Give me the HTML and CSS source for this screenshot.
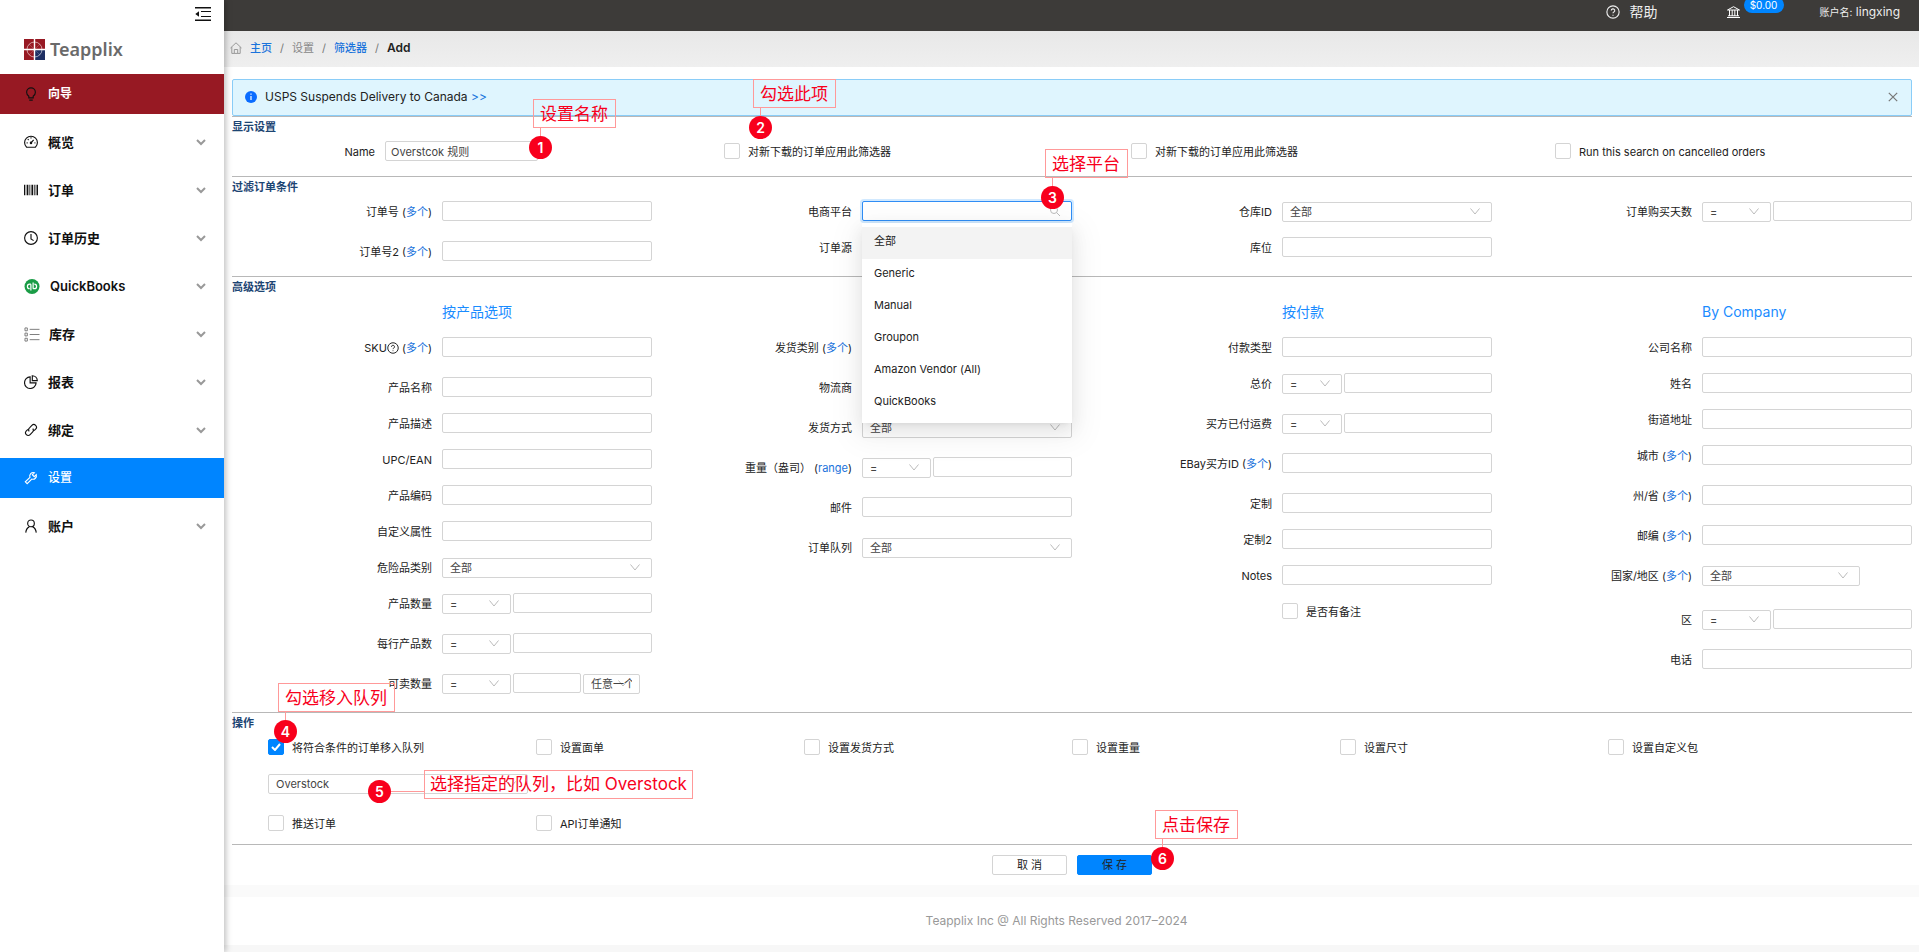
FILE: index.html
```html
<!DOCTYPE html>
<html lang="zh-CN">
<head>
<meta charset="utf-8">
<meta name="viewport" content="width=device-width, initial-scale=1">
<title>Teapplix</title>
<link rel="stylesheet" href="styles.css">
</head>
<body>
<svg class="defs" aria-hidden="true">
  <symbol id="chev" viewBox="0 0 10 7"><path d="M1 1l4 4 4-4"/></symbol>
  <symbol id="question" viewBox="0 0 16 16"><circle cx="8" cy="8" r="7"/><path d="M6 6.4a2 2 0 1 1 3 1.7c-.7.4-1 .7-1 1.4M8 11.2v1"/></symbol>
</svg>
<div class="layout">
  <aside class="sidebar">
    <div class="collapse">
      <button type="button" aria-label="收起菜单"><svg width="16" height="14" viewBox="0 0 16 14" fill="none" stroke="#111" stroke-width="1"><path d="M0 .8h16M0 13.2h16" stroke-width="1.5"/><path d="M6 4.500h10M6 9.500h10"/><path d="M4 4.2v5.6L.3 7z" fill="#111" stroke="none"/></svg></button>
    </div>
    <a class="logo" href="#">
      <svg width="21" height="21" viewBox="0 0 21 21"><path fill="#971923" d="M0 0h21v21H0z"/><path fill="#1e2f63" d="M11 11h10v10H11z"/><path stroke="#fff" stroke-width="1.4" d="M10.5 0v21M0 10.5h21"/><circle cx="10.5" cy="10.5" r="7.5" fill="none" stroke="#fff" stroke-width=".7" opacity=".8"/><path d="M5 5l11 11M16 5L5 16" stroke="#fff" stroke-width=".3" opacity=".6"/></svg>
      <span>Teapplix</span>
    </a>
    <nav class="menu">
      <a class="item guide" href="#"><svg class="mi" viewBox="0 0 16 16"><path d="M5.5 12.5v-2C4 9.600 3 8 3 6a5 5 0 0 1 10 0c0 2-1 3.600-2.500 4.500v2zM6 15h4"/></svg><span>向导</span></a>
      <a class="item" href="#"><svg class="mi" viewBox="0 0 16 16"><path d="M3 14a7.300 7.300 0 1 1 10 0zM8 9l3-3.500M8 2.500V4M3 9h1.200M4.300 4.800l1 .9M12 9h1"/><circle cx="8" cy="9" r=".8"/></svg><span>概览</span><svg class="chev"><use href="#chev"/></svg></a>
      <a class="item" href="#"><svg class="mi" viewBox="0 0 16 16"><g fill="#111" stroke="none"><path d="M0 2h1.500v12H0zM3 2h2v12H3zM6.200 2h1v12h-1zM8.500 2h2v12h-2zM11.800 2h1.200v12h-1.200zM14.300 2H16v12h-1.700z"/></g></svg><span>订单</span><svg class="chev"><use href="#chev"/></svg></a>
      <a class="item" href="#"><svg class="mi" viewBox="0 0 16 16"><circle cx="8" cy="8" r="7.300"/><path d="M8 3.500V9l3 2"/></svg><span>订单历史</span><svg class="chev"><use href="#chev"/></svg></a>
      <a class="item" href="#"><svg class="mi big" viewBox="0 0 16 16"><circle cx="8" cy="8" r="8" fill="#1a9c46" stroke="none"/><g stroke="#fff" stroke-width="1.300"><path d="M6.800 5.500H5.500a2.300 2.300 0 0 0 0 4.800M6.800 5.500v6.800M9.200 10.300h1.300a2.300 2.300 0 0 0 0-4.800M9.200 10.300V3.600"/></g></svg><span>QuickBooks</span><svg class="chev"><use href="#chev"/></svg></a>
      <a class="item" href="#"><svg class="mi big list" viewBox="0 0 16 16"><g stroke="#777" stroke-width="1"><path d="M.5 1h2.500v3H.5zM.5 6.500h2.500v3H.5zM.5 12h2.500v3H.5zM5.500 2.500H16M5.500 8H16M5.500 13.500H16"/></g></svg><span>库存</span><svg class="chev"><use href="#chev"/></svg></a>
      <a class="item" href="#"><svg class="mi" viewBox="0 0 16 16"><path d="M7 2.200A6.600 6.600 0 1 0 13.800 9H7zM9.500.8v5.700h5.700A5.800 5.800 0 0 0 9.500.8z"/></svg><span>报表</span><svg class="chev"><use href="#chev"/></svg></a>
      <a class="item" href="#"><svg class="mi" viewBox="0 0 16 16"><path d="M6 9.500a3 3 0 0 1 .3-4L9 2.700a3 3 0 0 1 4.300 4.300L11.500 8.800M10 6.500a3 3 0 0 1-.3 4L7 13.300A3 3 0 0 1 2.700 9L4.500 7.200"/></svg><span>绑定</span><svg class="chev"><use href="#chev"/></svg></a>
      <a class="item active" href="#"><svg class="mi" viewBox="0 0 16 16"><path d="M14 4.200l-2.300 2.300-2.200-2.200L11.800 2a4 4 0 0 0-5 5.200L1.500 12.400l2.100 2.100 5.300-5.300A4 4 0 0 0 14 4.200z"/></svg><span>设置</span></a>
      <a class="item" href="#"><svg class="mi" viewBox="0 0 16 16"><circle cx="8" cy="5" r="3.800"/><path d="M2 15.500c.4-3.500 2.300-5.700 4-6.500M14 15.500c-.4-3.500-2.300-5.700-4-6.500"/></svg><span>账户</span><svg class="chev"><use href="#chev"/></svg></a>
    </nav>
  </aside>

  <div class="main">
    <header class="topbar">
      <a class="help" href="#"><svg class="q" width="14" height="14"><use href="#question"/></svg>帮助</a>
      <a class="bank" href="#" aria-label="余额"><svg width="13" height="12" viewBox="0 0 13 12" fill="none" stroke="#fff" stroke-width="1"><path d="M.5 4L6.500.7l6 3.300zM0 11.500h13M1 9.800h11M2.500 4v6M5.200 4v6M7.800 4v6M10.500 4v6"/></svg><span class="badge">$0.00</span></a>
      <span class="account"><small>账户名:</small> lingxing</span>
    </header>

    <nav class="crumbs">
      <svg width="12" height="12" viewBox="0 0 12 12" fill="none" stroke="#999" stroke-width="1"><path d="M.5 6L6 .8 11.500 6M1.800 5v6.400h8.400V5M4.300 11V7.500h3.400V11"/></svg>
      <a href="#">主页</a><i>/</i><span>设置</span><i>/</i><a href="#">筛选器</a><i>/</i><b>Add</b>
    </nav>

    <main class="content">
      <div class="alert">
        <svg width="12" height="12" viewBox="0 0 12 12"><circle cx="6" cy="6" r="6" fill="#0a6cff"/><path d="M6 5v4M6 2.600v1.200" stroke="#fff" stroke-width="1.200"/></svg>
        <span>USPS Suspends Delivery to Canada <a href="#">&gt;&gt;</a></span>
        <button type="button" aria-label="关闭"><svg width="10" height="10" viewBox="0 0 10 10" stroke="#777" stroke-width="1.200"><path d="M.8.8l8.400 8.400M9.200.8L.8 9.200"/></svg></button>
      </div>

      <form>
        <section class="sec display">
          <h2>显示设置</h2>
          <div class="display-grid">
            <div class="name-row">
              <label for="name">Name</label>
              <div class="anchor name-box"><input id="name" type="text" value="Overstcok 规则">
                <div class="mark m1"><b>1</b><span>设置名称</span></div>
              </div>
            </div>
            <div class="anchor"><label class="check"><input type="checkbox"><span>对新下载的订单应用此筛选器</span></label><div class="mark m2"><b>2</b><span>勾选此项</span></div></div>
            <label class="check"><input type="checkbox"><span>对新下载的订单应用此筛选器</span></label>
            <label class="check"><input type="checkbox"><span>Run this search on cancelled orders</span></label>
          </div>
        </section>

        <section class="sec filter">
          <h2>过滤订单条件</h2>
          <div class="cols">
            <div class="col">
              <div class="row tall"><div class="lab"><label for="f1">订单号</label> (<a href="#">多个</a>)</div><div class="fld"><input id="f1" type="text"></div></div>
              <div class="row tall"><div class="lab"><label for="f2">订单号2</label> (<a href="#">多个</a>)</div><div class="fld"><input id="f2" type="text"></div></div>
            </div>
            <div class="col">
              <div class="row"><div class="lab"><label for="f3">电商平台</label></div>
                <div class="fld anchor"><input id="f3" class="focused" type="text" role="combobox" aria-expanded="true" aria-controls="plat">
                  <svg class="search" width="10" height="10" viewBox="0 0 10 10" fill="none" stroke="#bbb"><circle cx="4" cy="4" r="3.500"/><path d="M6.500 6.500L10 10"/></svg>
                  <ul class="popup" id="plat" role="listbox">
                    <li class="on" role="option">全部</li><li role="option">Generic</li><li role="option">Manual</li><li role="option">Groupon</li><li role="option">Amazon Vendor (All)</li><li role="option">QuickBooks</li>
                  </ul>
                  <div class="mark m3"><b>3</b><span>选择平台</span></div>
                </div></div>
              <div class="row"><div class="lab"><label for="f4">订单源</label></div><div class="fld"><input id="f4" type="text"></div></div>
            </div>
            <div class="col">
              <div class="row"><div class="lab"><label for="f5">仓库ID</label></div><div class="fld"><select id="f5"><option>全部</option></select></div></div>
              <div class="row"><div class="lab"><label for="f6">库位</label></div><div class="fld"><input id="f6" type="text"></div></div>
            </div>
            <div class="col">
              <div class="row"><div class="lab"><label for="f7">订单购买天数</label></div><div class="fld"><select class="op" aria-label="比较"><option>=</option></select><input id="f7" type="text"></div></div>
            </div>
          </div>
        </section>

        <section class="sec advanced">
          <h2>高级选项</h2>
          <div class="cols">
            <div class="col">
              <h3>按产品选项</h3>
              <div class="row tall"><div class="lab"><label for="a1">SKU</label><svg class="q dark" width="12" height="12"><use href="#question"/></svg> (<a href="#">多个</a>)</div><div class="fld"><input id="a1" type="text"></div></div>
              <div class="row"><div class="lab"><label for="a2">产品名称</label></div><div class="fld"><input id="a2" type="text"></div></div>
              <div class="row"><div class="lab"><label for="a3">产品描述</label></div><div class="fld"><input id="a3" type="text"></div></div>
              <div class="row"><div class="lab"><label for="a4">UPC/EAN</label></div><div class="fld"><input id="a4" type="text"></div></div>
              <div class="row"><div class="lab"><label for="a5">产品编码</label></div><div class="fld"><input id="a5" type="text"></div></div>
              <div class="row"><div class="lab"><label for="a6">自定义属性</label></div><div class="fld"><input id="a6" type="text"></div></div>
              <div class="row"><div class="lab"><label for="a7">危险品类别</label></div><div class="fld"><select id="a7"><option>全部</option></select></div></div>
              <div class="row tall"><div class="lab"><label for="a8">产品数量</label></div><div class="fld"><select class="op" aria-label="比较"><option>=</option></select><input id="a8" type="text"></div></div>
              <div class="row tall"><div class="lab"><label for="a9">每行产品数</label></div><div class="fld"><select class="op" aria-label="比较"><option>=</option></select><input id="a9" type="text"></div></div>
              <div class="row tall"><div class="lab"><label for="a10">可卖数量</label></div><div class="fld part"><select class="op" aria-label="比较"><option>=</option></select><input id="a10" type="text"><select class="any" aria-label="范围"><option>任意一个</option></select></div></div>
            </div>
            <div class="col">
              <h3></h3>
              <div class="row tall"><div class="lab"><label for="b1">发货类别</label> (<a href="#">多个</a>)</div><div class="fld"><input id="b1" type="text"></div></div>
              <div class="row tall"><div class="lab"><label for="b2">物流商</label></div><div class="fld"><input id="b2" type="text"></div></div>
              <div class="row tall"><div class="lab"><label for="b3">发货方式</label></div><div class="fld"><select id="b3"><option>全部</option></select></div></div>
              <div class="row tall"><div class="lab"><label for="b4">重量（盎司）</label> (<a href="#">range</a>)</div><div class="fld"><select class="op" aria-label="比较"><option>=</option></select><input id="b4" type="text"></div></div>
              <div class="row tall"><div class="lab"><label for="b5">邮件</label></div><div class="fld"><input id="b5" type="text"></div></div>
              <div class="row"><div class="lab"><label for="b6">订单队列</label></div><div class="fld"><select id="b6"><option>全部</option></select></div></div>
            </div>
            <div class="col">
              <h3>按付款</h3>
              <div class="row"><div class="lab"><label for="c1">付款类型</label></div><div class="fld"><input id="c1" type="text"></div></div>
              <div class="row tall"><div class="lab"><label for="c2">总价</label></div><div class="fld"><select class="op narrow" aria-label="比较"><option>=</option></select><input id="c2" type="text"></div></div>
              <div class="row tall"><div class="lab"><label for="c3">买方已付运费</label></div><div class="fld"><select class="op narrow" aria-label="比较"><option>=</option></select><input id="c3" type="text"></div></div>
              <div class="row tall"><div class="lab"><label for="c4">EBay买方ID</label> (<a href="#">多个</a>)</div><div class="fld"><input id="c4" type="text"></div></div>
              <div class="row"><div class="lab"><label for="c5">定制</label></div><div class="fld"><input id="c5" type="text"></div></div>
              <div class="row"><div class="lab"><label for="c6">定制2</label></div><div class="fld"><input id="c6" type="text"></div></div>
              <div class="row"><div class="lab"><label for="c7">Notes</label></div><div class="fld"><input id="c7" type="text"></div></div>
              <div class="row"><div class="lab"></div><div class="fld"><label class="check"><input type="checkbox"><span>是否有备注</span></label></div></div>
            </div>
            <div class="col">
              <h3>By Company</h3>
              <div class="row"><div class="lab"><label for="d1">公司名称</label></div><div class="fld"><input id="d1" type="text"></div></div>
              <div class="row"><div class="lab"><label for="d2">姓名</label></div><div class="fld"><input id="d2" type="text"></div></div>
              <div class="row"><div class="lab"><label for="d3">街道地址</label></div><div class="fld"><input id="d3" type="text"></div></div>
              <div class="row tall"><div class="lab"><label for="d4">城市</label> (<a href="#">多个</a>)</div><div class="fld"><input id="d4" type="text"></div></div>
              <div class="row tall"><div class="lab"><label for="d5">州/省</label> (<a href="#">多个</a>)</div><div class="fld"><input id="d5" type="text"></div></div>
              <div class="row tall"><div class="lab"><label for="d6">邮编</label> (<a href="#">多个</a>)</div><div class="fld"><input id="d6" type="text"></div></div>
              <div class="row taller"><div class="lab"><label for="d7">国家/地区</label> (<a href="#">多个</a>)</div><div class="fld"><select id="d7" class="country"><option>全部</option></select></div></div>
              <div class="row tall"><div class="lab"><label for="d8">区</label></div><div class="fld"><select class="op" aria-label="比较"><option>=</option></select><input id="d8" type="text"></div></div>
              <div class="row"><div class="lab"><label for="d9">电话</label></div><div class="fld"><input id="d9" type="text"></div></div>
            </div>
          </div>
        </section>

        <section class="sec actions">
          <h2>操作</h2>
          <div class="action-grid">
            <div class="anchor"><label class="check"><input type="checkbox" checked><span>将符合条件的订单移入队列</span></label><div class="mark m4"><b>4</b><span>勾选移入队列</span></div></div>
            <label class="check"><input type="checkbox"><span>设置面单</span></label>
            <label class="check"><input type="checkbox"><span>设置发货方式</span></label>
            <label class="check"><input type="checkbox"><span>设置重量</span></label>
            <label class="check"><input type="checkbox"><span>设置尺寸</span></label>
            <label class="check"><input type="checkbox"><span>设置自定义包</span></label>
            <div class="anchor queue"><select aria-label="队列"><option>Overstock</option></select><div class="mark m5"><b>5</b><span>选择指定的队列，比如 Overstock</span></div></div>
            <label class="check first"><input type="checkbox"><span>推送订单</span></label>
            <label class="check"><input type="checkbox"><span>API订单通知</span></label>
          </div>
        </section>

        <div class="buttons">
          <button type="button">取 消</button>
          <div class="anchor"><button type="submit" class="primary">保 存</button><div class="mark m6"><b>6</b><span>点击保存</span></div></div>
        </div>
      </form>
    </main>
    <footer class="footer">Teapplix Inc @ All Rights Reserved 2017–2024</footer>
  </div>
</div>
</body>
</html>
```
FILE: styles.css
```css
* { box-sizing: border-box; }
body {
  margin: 0;
  font: 11px/20px Inter, "Noto Sans CJK SC", sans-serif;
  color: #222;
  background: #f7f7f7;
}
a { color: #1a73dc; text-decoration: none; }
button { font: inherit; cursor: pointer; }
h2, h3, ul { margin: 0; padding: 0; }
.defs { position: absolute; width: 0; height: 0; }

.layout { display: flex; min-height: 100vh; }
.sidebar {
  flex: 0 0 224px;
  background: #fff;
  box-shadow: 2px 0 6px rgba(0, 0, 0, .25);
  z-index: 2;
}
.main { flex: 1; min-width: 0; }

.collapse { display: flex; justify-content: flex-end; padding: 7px 13px 0 0; }
.collapse button { display: flex; padding: 0; border: 0; background: none; }
.logo { display: flex; align-items: center; gap: 5px; padding: 18px 24px 14px; color: #6a6a6a; font: 600 18px/21px "Noto Sans", sans-serif; }
.item {
  display: flex;
  align-items: center;
  height: 40px;
  margin-bottom: 8px;
  padding: 0 18px 0 24px;
  color: #111;
  font-size: 13px;
  font-weight: 600;
}
.mi { width: 14px; height: 14px; margin-right: 10px; fill: none; stroke: currentColor; stroke-width: 1.3; }
.mi.big { width: 16px; height: 15px; }
.mi.list { margin-right: 9px; }
.chev { width: 10px; height: 7px; margin-left: auto; fill: none; stroke: #999; stroke-width: 2; }
.guide { background: #971923; color: #fff; font-size: 12px; }
.guide .mi { stroke: #111; }
.active { background: #0085ff; color: #fff; font-size: 12px; font-weight: 500; }

.topbar {
  display: flex;
  justify-content: flex-end;
  align-items: center;
  height: 31px;
  padding: 0 19px 7px 0;
  background: #3d3b39;
  color: #eee;
  font-size: 12px;
}
.q { fill: none; stroke: currentColor; stroke-width: 1.3; }
.help { display: flex; align-items: center; gap: 10px; margin-right: 69px; color: #eee; font-size: 14px; }
.bank { position: relative; display: flex; margin-right: 80px; }
.badge {
  position: absolute;
  left: 17px;
  bottom: 5px;
  width: 40px;
  border-radius: 8px;
  background: #0085ff;
  color: #fff;
  font-size: 10px;
  line-height: 16px;
  text-align: center;
}
.account small { font-size: 10px; }

.crumbs {
  display: flex;
  align-items: center;
  gap: 8px;
  height: 36px;
  padding: 0 6px 2px;
  background: linear-gradient(#e8e8e8, #efefef);
  color: #888;
}
.crumbs a { font-weight: 500; }
.crumbs i { font-style: normal; color: #777; }
.crumbs b { color: #222; font-size: 12px; font-weight: 600; }

.content { padding: 12px 7px 0 8px; background: #fff; }
.alert {
  display: flex;
  align-items: center;
  gap: 8px;
  height: 37px;
  padding: 0 13px 1px 12px;
  border: 1px solid #8acdf8;
  border-radius: 2px;
  background: #dff5fe;
  font-size: 12px;
}
.alert button { display: flex; margin-left: auto; padding: 0; border: 0; background: none; }

.sec { border-top: 1px solid #b8b8b8; }
.sec h2 { margin-bottom: -4px; color: #1d4573; font-size: 11px; font-weight: 600; line-height: 20px; }
.display { padding-bottom: 7px; }
.filter { padding-bottom: 3px; }
.advanced { padding-bottom: 7px; }
.actions { padding-bottom: 1px; border-bottom: 1px solid #b8b8b8; }

.display-grid { display: grid; grid-template-columns: 492fr 407fr 424fr 357fr; align-items: center; height: 36px; }
.name-row { display: flex; align-items: center; gap: 10px; }
.name-row > label { width: 143px; padding-top: 2px; text-align: right; }
.name-box { width: 153px; }
.name-box input { display: block; }

.cols { display: grid; grid-template-columns: repeat(4, 1fr); }
.cols h3 { height: 36px; padding-left: 50%; color: #1a8cff; font-size: 14px; font-weight: 400; line-height: 38px; }
.row { display: grid; grid-template-columns: 1fr 1fr; align-items: center; height: 36px; }
.tall { margin-bottom: 4px; }
.taller { margin-bottom: 8px; }
.lab { padding: 2px 10px 0 0; text-align: right; white-space: nowrap; }
.lab .q { vertical-align: -2px; }
.fld { display: flex; gap: 2px; min-width: 0; }
.part { padding-right: 12px; }

input[type="text"], select {
  flex: 1;
  width: 100%;
  min-width: 0;
  height: 20px;
  padding: 0 5px;
  border: 1px solid #d4d4d4;
  border-radius: 2px;
  background: #fff;
  color: #444;
  font: inherit;
  line-height: 18px;
}
select {
  appearance: none;
  margin-top: 1px;
  padding: 0 7px;
  background: #fff url("data:image/svg+xml,%3Csvg xmlns='http://www.w3.org/2000/svg' width='10' height='7' fill='none' stroke='%23bbb'%3E%3Cpath d='M.5.5L5 6 9.500.5'/%3E%3C/svg%3E") no-repeat right 11px center;
}
.op { flex: 0 0 69px; }
.narrow { flex-basis: 60px; }
.any { flex: 0 0 57px; }
.country { flex: 0 0 75%; }
.focused { outline: 0; }
input.focused { border-color: #2f8df5; box-shadow: 0 0 0 2px rgba(24, 144, 255, .2); }

.check { display: flex; align-items: center; gap: 8px; }
.check span { margin-top: 2px; line-height: 16px; }
.check input {
  appearance: none;
  flex: none;
  width: 16px;
  height: 16px;
  margin: 0;
  border: 1px solid #d4d4d4;
  border-radius: 2px;
  background: #fff;
}
.check input:checked {
  border-color: #0085ff;
  background: #0085ff url("data:image/svg+xml,%3Csvg xmlns='http://www.w3.org/2000/svg' width='10' height='8' fill='none' stroke='white' stroke-width='2'%3E%3Cpath d='M1 4l3 3 5-6'/%3E%3C/svg%3E") no-repeat center;
}

.anchor { position: relative; }
.search { position: absolute; right: 12px; top: 5px; }
.popup {
  position: absolute;
  z-index: 3;
  top: 22px;
  left: 0;
  width: 100%;
  padding: 4px 0;
  background: #fff;
  list-style: none;
  box-shadow: 0 3px 6px -4px rgba(0, 0, 0, .12), 0 6px 16px rgba(0, 0, 0, .08), 0 9px 28px 8px rgba(0, 0, 0, .05);
}
.popup li { padding: 4px 12px 8px; }
.popup .on { background: #f3f3f3; }

.action-grid {
  display: grid;
  grid-template-columns: repeat(6, 1fr);
  grid-template-rows: 36px 38px 40px;
  align-items: center;
  padding: 0 36px;
}
.queue { grid-column: 1; padding-right: 8px; }
.queue select { display: block; margin-top: 0; }
.first { grid-column: 1; }

.mark { position: absolute; z-index: 4; color: #f8001c; }
.mark b {
  display: block;
  width: 23px;
  height: 23px;
  border-radius: 50%;
  background: #f8001c;
  color: #fff;
  font-size: 14px;
  font-weight: 600;
  line-height: 23px;
  text-align: center;
}
.mark span {
  position: absolute;
  bottom: 31px;
  left: 4px;
  height: 29px;
  padding: 1px 7px 0 6px;
  border: 1px solid #f99;
  font-size: 17px;
  line-height: 27px;
  white-space: nowrap;
}
.mark::before { content: ""; position: absolute; left: 11px; bottom: 23px; height: 8px; border-left: 1px solid #f99; }
.m1 { left: 144px; top: -5px; }
.m2 { left: 25px; top: -26px; }
.m3 { left: 179px; top: -15px; }
.m4 { left: 6px; top: -18px; }
.m5 { left: 100px; top: 6px; }
.m5 span { bottom: 4px; left: 56px; padding: 0 5px; }
.m5::before { left: 23px; bottom: 11px; width: 33px; height: 1px; border: 0; background: #f99; }
.m6 { left: 74px; top: -8px; }

.buttons { display: flex; justify-content: center; align-items: center; gap: 10px; height: 40px; }
.buttons button { display: block; width: 75px; height: 20px; padding: 0; border: 1px solid #d4d4d4; border-radius: 2px; background: #fff; line-height: 18px; color: #222; }
.buttons .primary { border-color: #0085ff; background: #0085ff; }

.footer {
  padding: 14px 30px 14px 0;
  border-top: 12px solid #fafafa;
  background: #fff;
  color: #999;
  font-size: 12px;
  text-align: center;
}
```
